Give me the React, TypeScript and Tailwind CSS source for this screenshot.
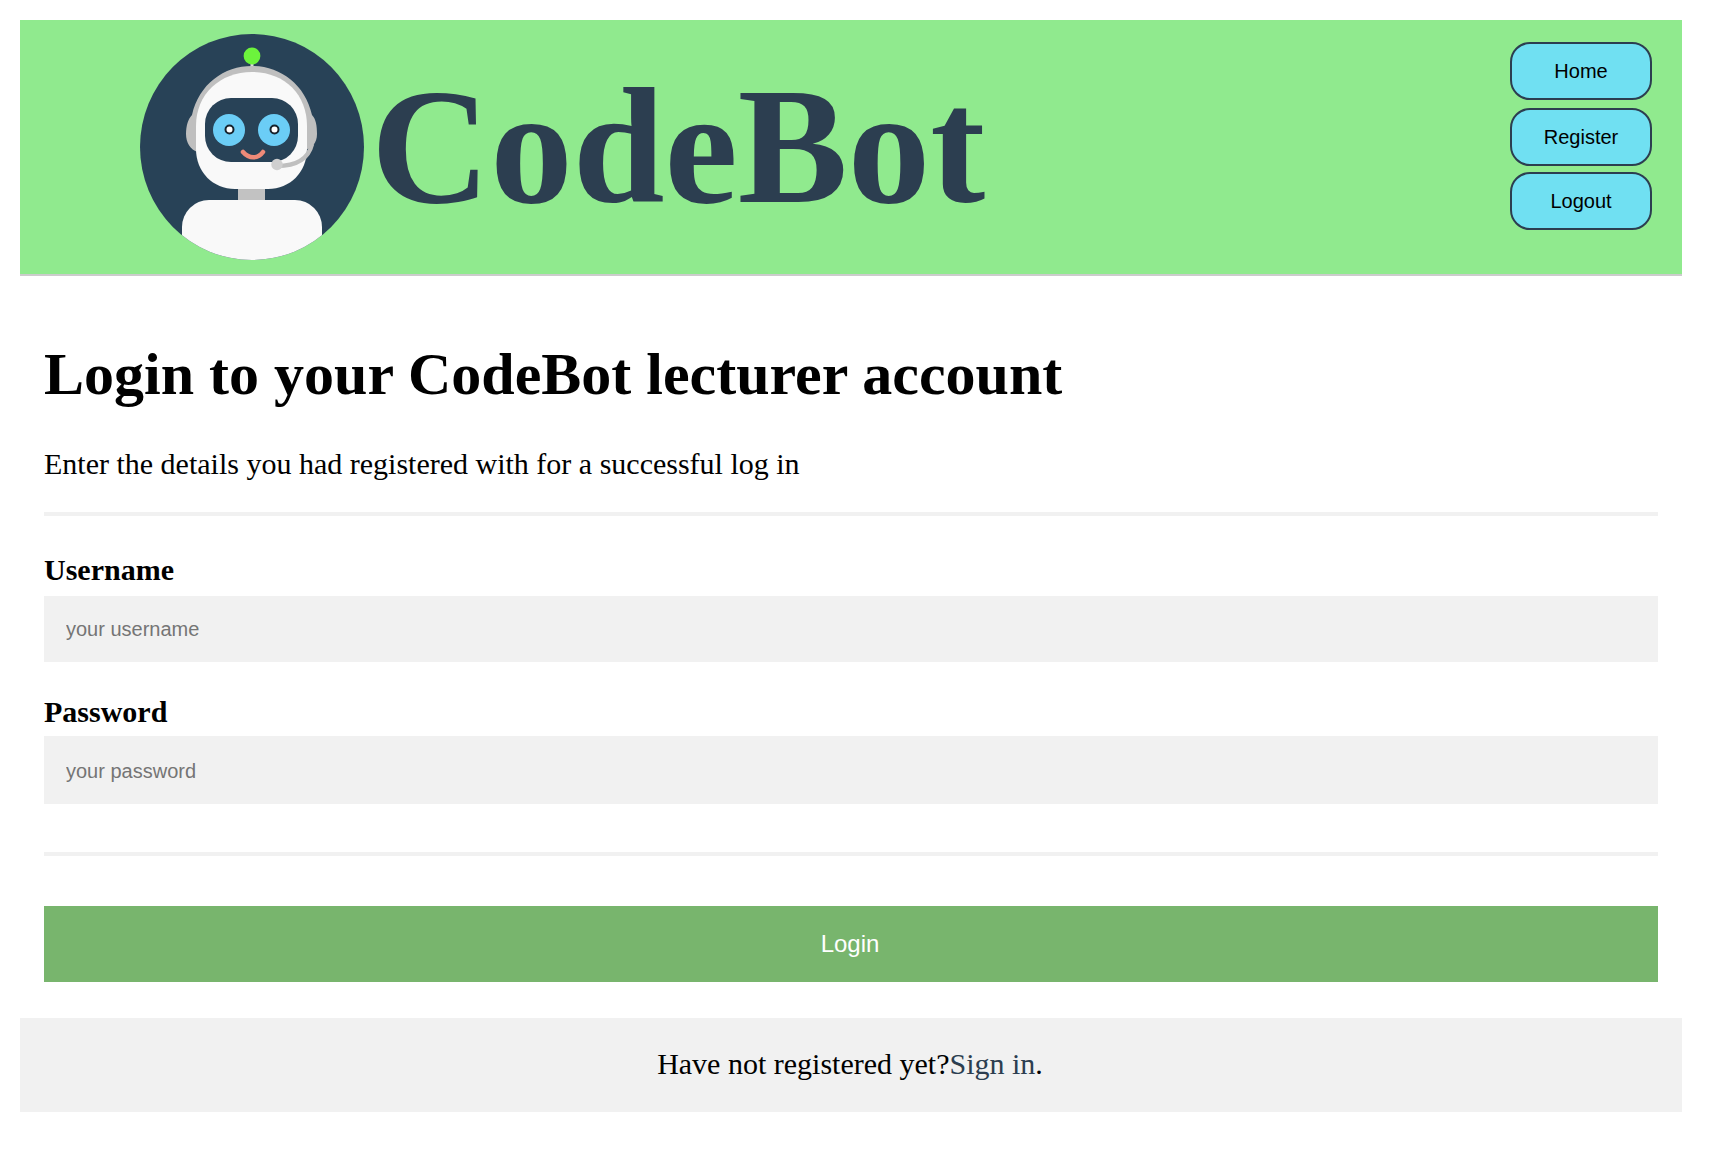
function Logo() {
  return (
    <svg viewBox="0 0 224 226" className="w-[224px] h-[226px] shrink-0">
      <defs>
        <clipPath id="c"><ellipse cx="112" cy="113" rx="112" ry="113" /></clipPath>
      </defs>
      <ellipse cx="112" cy="113" rx="112" ry="113" fill="#284257" />
      <g clipPath="url(#c)">
        <rect x="98" y="150" width="27" height="20" fill="#c2c2c2" />
        <rect x="42" y="166" width="140" height="90" rx="27" fill="#f9f9f9" />
      </g>
      <rect x="110.5" y="28" width="3" height="12" fill="#dcdcdc" />
      <circle cx="112" cy="22" r="8.4" fill="#6cf33c" />
      <path d="M46 100 C46 92 48 85 52 81 C59 50 84 32 112 32 C140 32 165 50 172 81 C176 85 177 92 177 100 C177 109 172 114 165 116 L58 118 C50 116 46 108 46 100 Z" fill="#bfbfbf" />
      <path d="M56 92 C56 60 80 38 112 38 C144 38 167 60 167 92 L167 115 C167 138 150 155 128 155 L95 155 C73 155 56 138 56 115 Z" fill="#f9f9f9" />
      <rect x="65" y="64" width="93" height="64" rx="26" fill="#284257" />
      <circle cx="89" cy="96" r="16" fill="#6bcdf6" />
      <circle cx="134" cy="96" r="16" fill="#6bcdf6" />
      <circle cx="89.5" cy="95.5" r="4" fill="#fff" stroke="#16222c" strokeWidth="2" />
      <circle cx="134.5" cy="95.5" r="4" fill="#fff" stroke="#16222c" strokeWidth="2" />
      <path d="M103 118 C109 125 118 125 123 118" fill="none" stroke="#ee8a78" strokeWidth="4.5" strokeLinecap="round" />
      <path d="M172 110 C168 126 156 132 137 132" fill="none" stroke="#bfbfbf" strokeWidth="4.5" />
      <circle cx="137" cy="130.5" r="5.7" fill="#cfcfcf" />
    </svg>
  );
}

function NavButton({ label, className }: { label: string; className?: string }) {
  return (
    <button className={`w-[142px] h-[58px] rounded-[20px] border-2 border-[#2c3e50] bg-[#70e0f2] text-black text-[20px] [font-family:'Liberation_Sans',Arial,sans-serif] ${className ?? ""}`}>
      {label}
    </button>
  );
}

export default function App() {
  return (
    <div className="min-h-[1172px] bg-white pt-5 pl-5 pr-[28px] text-black [font-family:'Liberation_Serif','Times_New_Roman',serif]">
      <header className="h-[256px] bg-[#90ea8e] border-b-2 border-[#cccccc] flex items-start justify-between pl-[120px] pr-[30px]">
        <div className="flex items-center gap-[7px] h-[254px]">
          <Logo />
          <span className="text-[165px] leading-none font-bold text-[#2c3e50] mb-[2px]">CodeBot</span>
        </div>
        <nav className="flex flex-col gap-[8px] pt-[22px]">
          <NavButton label="Home" />
          <NavButton label="Register" />
          <NavButton label="Logout" className="-mt-[2px]" />
        </nav>
      </header>
      <main className="px-6">
        <h1 className="mt-[64px] text-[60px] leading-[69px] font-bold">Login to your CodeBot lecturer account</h1>
        <p className="mt-[37px] text-[30px] leading-[35px]">Enter the details you had registered with for a successful log in</p>
        <hr className="mt-[31px] border-0 h-1 bg-[#f1f1f1]" />
        <label className="block mt-[37px] text-[30px] leading-[33px] font-bold">Username</label>
        <input placeholder="your username" className="block w-full h-[66px] mt-[10px] px-[22px] bg-[#f1f1f1] text-[20px] outline-none placeholder:text-[#757575] [font-family:'Liberation_Sans',Arial,sans-serif]" />
        <label className="block mt-[33px] text-[30px] leading-[33px] font-bold">Password</label>
        <input placeholder="your password" className="block w-full h-[68px] mt-[8px] px-[22px] pt-[2px] bg-[#f1f1f1] text-[20px] outline-none placeholder:text-[#757575] [font-family:'Liberation_Sans',Arial,sans-serif]" />
        <hr className="mt-[48px] border-0 h-1 bg-[#f1f1f1]" />
        <button className="block w-full h-[76px] mt-[50px] pr-[2px] bg-[#78b56d] text-white text-[24px] [font-family:'Liberation_Sans',Arial,sans-serif]">Login</button>
      </main>
      <footer className="mt-[36px] h-[94px] pb-1 pr-[2px] bg-[#f1f1f1] flex items-center justify-center text-[30px]">
        <span>Have not registered yet?<a href="#" className="text-[#2c3e50]">Sign in</a>.</span>
      </footer>
    </div>
  );
}
